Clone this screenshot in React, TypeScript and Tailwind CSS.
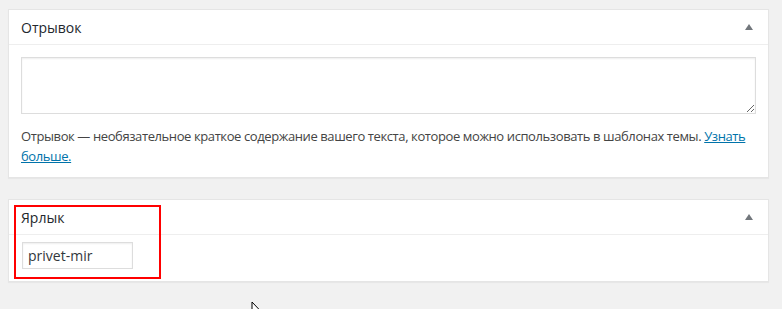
import React from 'react';

const font = { fontFamily: '"Open Sans", "Noto Sans", sans-serif' };

// small up triangle used as the "collapse" toggle of a meta box
const Toggle = () => (
  <svg width="8" height="6" viewBox="0 0 8 6" className="mr-[15px]">
    <polygon points="4,0 8,6 0,6" fill="#72777c" />
  </svg>
);

const PostBox: React.FC<{ title: string; children: React.ReactNode; className?: string }> = ({ title, children, className }) => (
  <div className={`relative w-[761px] ml-[8px] bg-white border border-[#e5e5e5] shadow-[0_1px_1px_rgba(0,0,0,0.04)] ${className || ''}`}>
    <div className="flex items-center justify-between h-[35px] pl-[12px] border-b border-[#eeeeee]">
      <h2 className="text-[14px] text-[#23282d] leading-[35px] pt-[1px]">{title}</h2>
      <Toggle />
    </div>
    {children}
  </div>
);

export default function App() {
  return (
    <div className="relative w-[782px] h-[309px] overflow-hidden bg-[#f1f1f1] pt-[9px]" style={font}>
      <PostBox title="Отрывок">
        <div className="px-[12px] pt-[12px] pb-[11px]">
          <textarea
            className="block w-[735px] h-[57px] border border-[#dddddd] shadow-[inset_0_1px_2px_rgba(0,0,0,0.07)] bg-white resize-y"
          />
          <p className="mt-[13px] text-[13px] leading-[19.5px] tracking-[-0.4px] text-[#444444]">
            Отрывок — необязательное краткое содержание вашего текста, которое можно использовать в шаблонах темы.{' '}
            <a href="#" className="text-[#0073aa] underline">Узнать больше.</a>
          </p>
        </div>
      </PostBox>

      <PostBox title="Ярлык" className="mt-[21px]">
        <div className="px-[13px] pt-[7px] pb-[12px]">
          <input
            defaultValue="privet-mir"
            className="block w-[111px] h-[27px] px-[5px] border border-[#dddddd] shadow-[inset_0_1px_2px_rgba(0,0,0,0.07)] text-[14px] text-[#32373c] bg-white outline-none"
          />
        </div>
        {/* red highlight around the slug box */}
        <div className="absolute left-[5px] top-[5px] w-[147px] h-[74px] border-2 border-[#ff0000] pointer-events-none" />
      </PostBox>

      {/* mouse pointer */}
      <svg className="absolute left-[251px] top-[301px]" width="12" height="19" viewBox="0 0 12 19">
        <path d="M1 1 L1 16 L4.5 12.5 L7 18 L9 17 L6.5 11.5 L11 11.5 Z" fill="#ffffff" stroke="#000000" strokeWidth="1" strokeLinejoin="round" />
      </svg>
    </div>
  );
}
